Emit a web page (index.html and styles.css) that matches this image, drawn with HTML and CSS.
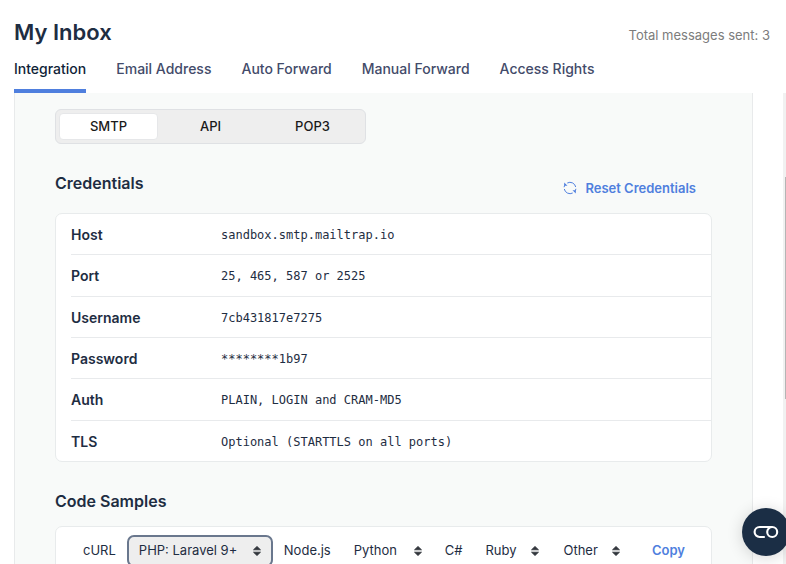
FILE: index.html
```html
<!DOCTYPE html>
<html lang="en">
<head>
<meta charset="utf-8">
<meta name="viewport" content="width=device-width, initial-scale=1">
<title>My Inbox</title>
<link rel="stylesheet" href="styles.css">
</head>
<body>
<svg class="sprite" aria-hidden="true">
  <symbol id="sort" viewBox="0 0 8 12"><path d="M4 1.4 7.5 4.8H.5zM4 10.6.5 7.2h7z" fill="currentColor" stroke="currentColor" stroke-width=".8" stroke-linejoin="round"/></symbol>
</svg>
<header class="header">
  <div class="title-row">
    <h1 class="title">My Inbox</h1>
    <span class="total">Total messages sent: 3</span>
  </div>
  <nav class="tabs">
    <a class="tab tab-active" href="#integration">Integration</a>
    <a class="tab" href="#email">Email Address</a>
    <a class="tab" href="#auto">Auto Forward</a>
    <a class="tab" href="#manual">Manual Forward</a>
    <a class="tab" href="#access">Access Rights</a>
  </nav>
</header>
<div class="scroll-area">
  <main class="panel">
    <div class="segments">
      <button class="segment segment-active" type="button">SMTP</button>
      <button class="segment" type="button">API</button>
      <button class="segment" type="button">POP3</button>
    </div>
    <section>
      <div class="section-head">
        <h2 class="heading">Credentials</h2>
        <button class="reset" type="button">
          <svg class="reset-icon" viewBox="0 0 14 14" fill="none" stroke="currentColor" aria-hidden="true">
            <path d="M4.3 2A5.8 5.8 0 0 1 12.7 6M9.7 12A5.8 5.8 0 0 1 1.3 8M1.1 6.2Q1.3 4.2 2.6 3M12.9 7.8Q12.7 9.8 11.4 11"/>
            <path d="M1.2 1.5v3.3h3.3zM12.8 12.5V9.2H9.5z" fill="currentColor" stroke="none"/>
          </svg>
          Reset Credentials
        </button>
      </div>
      <div class="card credentials">
        <table>
          <tbody>
            <tr><th scope="row">Host</th><td>sandbox.smtp.mailtrap.io</td></tr>
            <tr><th scope="row">Port</th><td>25, 465, 587 or 2525</td></tr>
            <tr><th scope="row">Username</th><td>7cb431817e7275</td></tr>
            <tr><th scope="row">Password</th><td>********1b97</td></tr>
            <tr><th scope="row">Auth</th><td>PLAIN, LOGIN and CRAM-MD5</td></tr>
            <tr><th scope="row">TLS</th><td>Optional (STARTTLS on all ports)</td></tr>
          </tbody>
        </table>
      </div>
    </section>
    <section class="samples">
      <h2 class="heading">Code Samples</h2>
      <div class="card languages">
        <button class="language" type="button">cURL</button>
        <div class="picker picker-php">
          <select class="language" aria-label="PHP samples"><option>PHP: Laravel 9+</option></select>
          <svg class="sort" aria-hidden="true"><use href="#sort"/></svg>
        </div>
        <button class="language" type="button">Node.js</button>
        <div class="picker picker-python">
          <select class="language" aria-label="Python samples"><option>Python</option></select>
          <svg class="sort" aria-hidden="true"><use href="#sort"/></svg>
        </div>
        <button class="language" type="button">C#</button>
        <div class="picker picker-ruby">
          <select class="language" aria-label="Ruby samples"><option>Ruby</option></select>
          <svg class="sort" aria-hidden="true"><use href="#sort"/></svg>
        </div>
        <div class="picker picker-other">
          <select class="language" aria-label="Other samples"><option>Other</option></select>
          <svg class="sort" aria-hidden="true"><use href="#sort"/></svg>
        </div>
        <button class="copy" type="button">Copy</button>
      </div>
    </section>
  </main>
  <div class="scrollbar" aria-hidden="true"><div class="thumb"></div></div>
</div>
<button class="assist" type="button" aria-label="Open assistant">
  <svg viewBox="0 0 26 14" width="26" height="14" fill="none" stroke="currentColor" stroke-width="2.1" aria-hidden="true">
    <path d="M11.8 12H6.6A5 5 0 0 1 6.6 2H19.2"/>
    <circle cx="19.2" cy="7" r="5"/>
  </svg>
</button>
</body>
</html>
```
FILE: styles.css
```css
* { box-sizing: border-box; }

body {
  margin: 0;
  height: 100vh;
  display: flex;
  flex-direction: column;
  overflow: hidden;
  background: #fff;
  color: #1e2d42;
  font: 14px/20px Inter, "Liberation Sans", sans-serif;
}

button, select {
  margin: 0;
  padding: 0;
  border: 0;
  background: none;
  color: inherit;
  font: inherit;
}

h1, h2 { margin: 0; }

.sprite { display: none; }

.header { padding: 18px 16px 0 14px; }

.title-row {
  display: flex;
  align-items: flex-end;
  justify-content: space-between;
}

.title {
  font-size: 22px;
  line-height: 28px;
  font-weight: 600;
}

.total {
  padding-bottom: 1px;
  color: #7c7c7c;
  font-size: 13px;
}

.tabs {
  display: flex;
  gap: 30px;
  padding-top: 13px;
}

.tab {
  height: 34px;
  color: #434b6a;
  font-weight: 500;
  text-decoration: none;
  white-space: nowrap;
}

.tab-active {
  color: #101f38;
  background: linear-gradient(#4f7fde, #4f7fde) bottom / 100% 4px no-repeat;
  border-radius: 3px 3px 0 0;
}

.scroll-area {
  flex: 1;
  min-height: 0;
  display: flex;
  justify-content: space-between;
  overflow: hidden;
}

.panel {
  flex: 1;
  align-self: flex-start;
  margin: 0 30px 0 14px;
  padding: 16px 40px 40px;
  border: solid #e8eaeb;
  border-width: 0 1px;
  background: #f8faf9;
}

.segments {
  display: flex;
  width: max-content;
  gap: 3px;
  padding: 3px;
  border: 1px solid #dfe1e4;
  border-radius: 6px;
  background: #eee;
}

.segment {
  width: 99px;
  height: 27px;
  padding-bottom: 2px;
  border: 1px solid transparent;
  border-radius: 4px;
  color: #1a1a1a;
  font-size: 13px;
  font-weight: 500;
}

.segment-active {
  background: #fff;
  border-color: #e6e7e9;
}

.heading {
  font-size: 16px;
  line-height: 20px;
  font-weight: 600;
}

.section-head {
  display: flex;
  justify-content: space-between;
  padding: 29px 16px 15px 0;
}

.reset {
  display: flex;
  align-items: center;
  gap: 8px;
  padding-top: 5px;
  color: #4f7fde;
  font-size: 13px;
  font-weight: 600;
}

.reset-icon {
  width: 14px;
  height: 14px;
}

.card {
  border: 1px solid #e8ebec;
  border-radius: 7px;
  background: #fff;
}

.credentials { padding-left: 15px; }

table {
  width: 100%;
  border-collapse: separate;
  border-spacing: 0;
}

th, td {
  height: 41px;
  padding: 1px 0 0;
  border-bottom: 1px solid #e8eaec;
  text-align: left;
}

tr:nth-child(3n + 2) > * { height: 42px; }

tr:last-child > * {
  height: 40px;
  border-bottom: 0;
}

th {
  width: 150px;
  font-weight: 600;
}

td { font: 12px/20px "DejaVu Sans Mono", "Liberation Mono", monospace; }

.samples { padding-top: 29px; }

.samples .heading { margin-bottom: 15px; }

.languages {
  display: flex;
  align-items: flex-start;
  padding: 8px 26px 16px 16px;
}

.language {
  height: 32px;
  padding: 0 11px 2px;
  font-size: 13px;
  white-space: nowrap;
}

.picker {
  position: relative;
  flex: none;
}

.picker .language {
  width: 100%;
  padding: 0 12px 2px;
  appearance: none;
}

.picker-php { width: 146px; }
.picker-python { width: 92px; }
.picker-ruby { width: 78px; }
.picker-other { width: 81px; }

.picker-php .language {
  padding: 0 10px 2px;
  border: 2px solid #69778d;
  border-radius: 7px;
  background: #eee;
}

.sort {
  position: absolute;
  top: 10px;
  right: 12px;
  width: 8px;
  height: 12px;
  color: #30343a;
  pointer-events: none;
}

.copy {
  height: 32px;
  margin-left: auto;
  padding-bottom: 2px;
  color: #4f7fde;
  font-size: 13px;
  font-weight: 600;
}

.scrollbar {
  width: 3px;
  padding: 84px 0 0 2px;
  background: #f1f1f1;
}

.thumb {
  height: 58%;
  max-height: 222px;
  background: #b5b5b5;
}

.assist {
  position: fixed;
  right: -4px;
  bottom: 8px;
  display: flex;
  align-items: center;
  justify-content: center;
  width: 48px;
  height: 48px;
  border-radius: 50%;
  background: #1b2e45;
  color: #fff;
  box-shadow: 0 2px 16px rgba(0, 0, 0, .16);
}
```
